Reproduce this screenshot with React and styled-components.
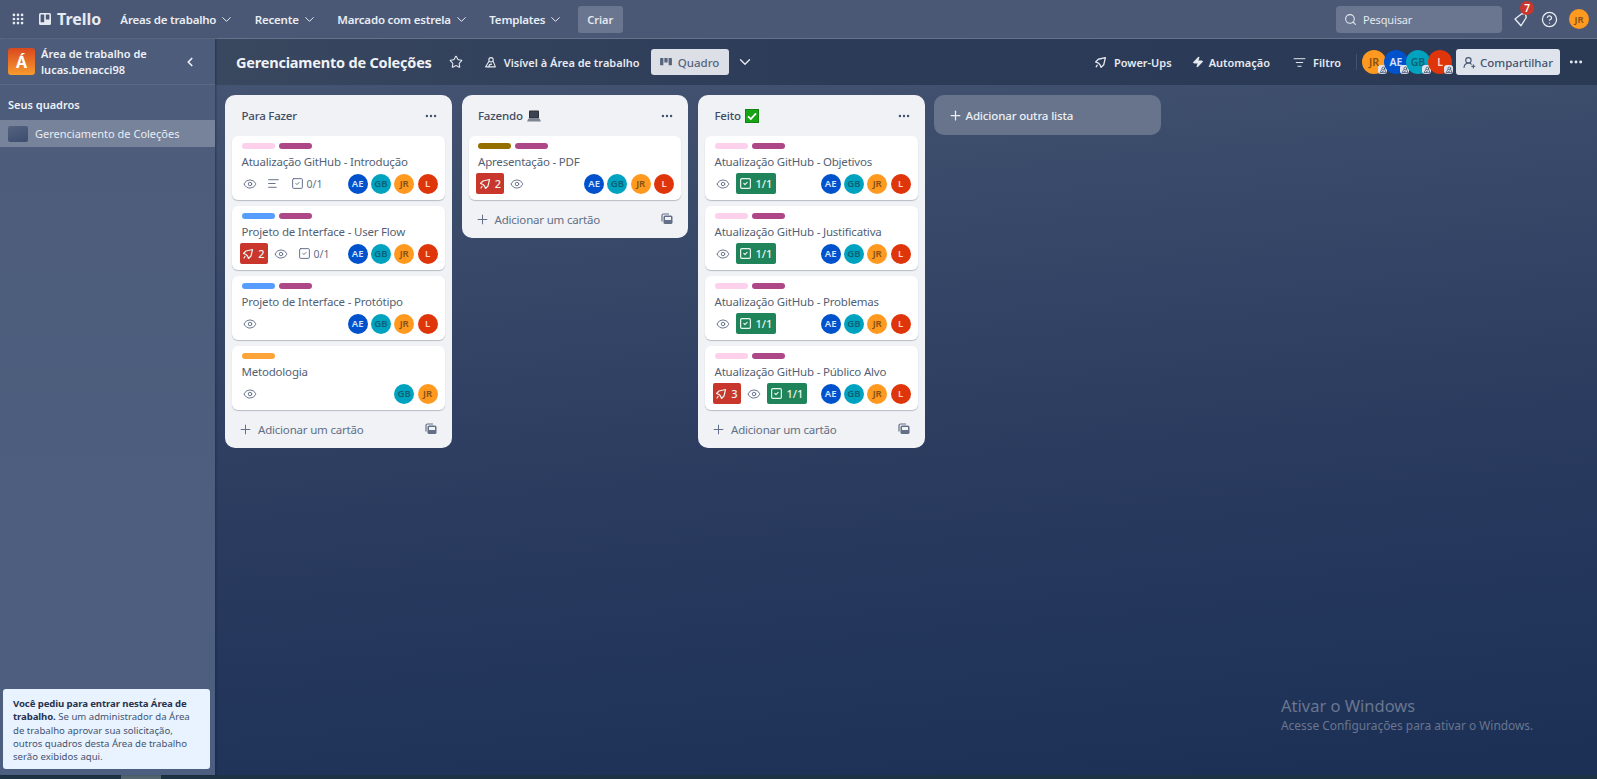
import React from 'react'
import styled, { createGlobalStyle } from 'styled-components'
import {
  AlignLeft, ChevronDown, ChevronLeft, CircleHelp, Ellipsis, Eye, Grip, ListFilter,
  Plus, Search, SquareCheck, Star, UserRoundPlus, Zap,
} from 'lucide-react'

const GlobalStyle = createGlobalStyle`
  html, body { margin: 0; padding: 0; height: 100%; overflow: hidden; }
  body { font-family: "Noto Sans", "Open Sans", sans-serif; }
  * { box-sizing: border-box; }
`

const Page = styled.div`
  position: relative;
  height: 100vh;
  display: flex;
  flex-direction: column;
  overflow: hidden;
  background: linear-gradient(175deg, #4b5a78 0%, #3c4c6b 25%, #2a3b5f 60%, #1b2f55 100%);
`

const TopNav = styled.header`
  flex: none;
  height: 39px;
  display: flex;
  align-items: center;
  padding: 0 8px 0 11px;
  background: #4a5875;
  border-bottom: 1px solid #65728c;
  color: #e9edf4;
`

const Logo = styled.div`
  display: flex;
  align-items: center;
  gap: 6px;
  margin: 0 19px 0 14px;
  font-size: 16px;
  font-weight: 700;
  color: #e6eaf1;
`

const NavItem = styled.div`
  display: flex;
  align-items: center;
  gap: 3px;
  margin-right: 20.5px;
  font-size: 11.5px;
  font-weight: 600;
  letter-spacing: -0.2px;
  white-space: nowrap;
`

const CreateButton = styled.div`
  height: 27px;
  width: 45px;
  margin-left: -6px;
  display: flex;
  align-items: center;
  justify-content: center;
  border-radius: 3px;
  background: #6a768f;
  font-size: 11px;
  font-weight: 600;
  color: #e4e8ef;
`

const NavRight = styled.div`
  margin-left: auto;
  display: flex;
  align-items: center;
`

const SearchBox = styled.div`
  width: 166px;
  height: 27px;
  display: flex;
  align-items: center;
  gap: 6px;
  padding-left: 8px;
  border-radius: 4px;
  background: #6a768f;
  font-size: 11px;
  letter-spacing: -0.15px;
  color: #e4e8ef;
`

const BellWrap = styled.div`
  position: relative;
  width: 18px;
  height: 18px;
  margin: 0 11px 0 10px;
`

const CountBadge = styled.span`
  position: absolute;
  top: -9px;
  left: 8px;
  width: 14px;
  height: 14px;
  border-radius: 50%;
  background: #c9372c;
  color: #fff;
  font-size: 10px;
  font-weight: 600;
  line-height: 14px;
  text-align: center;
`

const Body = styled.div`
  flex: 1;
  min-height: 0;
  display: flex;
`

const Sidebar = styled.aside`
  flex: none;
  width: 215px;
  display: flex;
  flex-direction: column;
  background: linear-gradient(180deg, #4d5c7a, #4d5f80);
  box-shadow: 1px 0 2px rgba(20, 30, 55, 0.45);
  z-index: 1;
`

const WorkspaceHead = styled.div`
  flex: none;
  height: 46px;
  display: flex;
  align-items: center;
  gap: 6px;
  padding: 0 18px 0 8px;
  border-bottom: 1px solid #5c6985;
  color: #eef1f6;
`

const WorkspaceTile = styled.div`
  flex: none;
  width: 27px;
  height: 27px;
  display: flex;
  align-items: center;
  justify-content: center;
  border-radius: 3px;
  background: linear-gradient(180deg, #d9481f, #f89b2e);
  color: #fff;
  font-size: 16px;
  font-weight: 700;
`

const WorkspaceName = styled.div`
  flex: 1;
  font-size: 11px;
  font-weight: 600;
  line-height: 16px;
`

const SectionTitle = styled.div`
  margin: 12px 8px 7px;
  height: 16px;
  font-size: 11px;
  font-weight: 600;
  line-height: 16px;
  color: #eef1f6;
`

const BoardRow = styled.div`
  height: 27px;
  display: flex;
  align-items: center;
  gap: 7px;
  padding-left: 8px;
  background: #76839b;
  font-size: 11px;
  color: #e8ecf3;
`

const BoardThumb = styled.div`
  width: 20px;
  height: 16px;
  border-radius: 2px;
  background: linear-gradient(160deg, #55637f, #3b4c6e);
`

const Notice = styled.div`
  margin: auto 5px 6px 3px;
  height: 80px;
  padding: 8px 17px 8px 10px;
  border-radius: 3px;
  background: #e9f2ff;
  font-size: 9.6px;
  line-height: 13.3px;
  color: #44546f;

  strong { font-weight: 700; letter-spacing: -0.1px; color: #26334d; }
`

const Main = styled.main`
  flex: 1;
  min-width: 0;
  display: flex;
  flex-direction: column;
`

const BoardHeader = styled.div`
  flex: none;
  height: 46px;
  display: flex;
  align-items: center;
  padding: 0 13px 0 21px;
  background: linear-gradient(90deg, #39475f, #2c3b58 45%, #2a3a55);
  color: #e6eaf1;
`

const BoardTitle = styled.h1`
  margin: 0 17px 0 0;
  font-size: 14.5px;
  font-weight: 700;
  letter-spacing: -0.2px;
  white-space: nowrap;
  color: #f0f2f6;
`

const HeaderAction = styled.div`
  display: flex;
  align-items: center;
  gap: ${(p) => p.$gap || 7}px;
  margin-left: ${(p) => p.$left || 0}px;
  font-size: 11px;
  font-weight: 600;
  white-space: nowrap;
`

const ViewButton = styled.div`
  width: 78px;
  height: 26px;
  margin-left: 11px;
  display: flex;
  align-items: center;
  justify-content: center;
  gap: 6px;
  border-radius: 3px;
  background: #dcdfe6;
  font-size: 11.5px;
  font-weight: 500;
  color: #56647d;
`

const ViewCaret = styled.span`
  display: flex;
  margin-left: 7px;
`

const HeaderRight = styled.div`
  margin-left: auto;
  display: flex;
  align-items: center;
`

const Divider = styled.div`
  width: 1px;
  height: 16px;
  margin: 0 5px 0 15px;
  background: #45526c;
`

const HeadAvatars = styled.div`
  display: flex;
  margin-right: 1px;
`

const HeadAvatar = styled.div`
  position: relative;
  width: 24px;
  height: 24px;
  margin-right: -2px;
  display: flex;
  align-items: center;
  justify-content: center;
  border-radius: 50%;
  background: ${(p) => p.$bg};
  color: ${(p) => p.$fg};
  font-size: 10.5px;
  font-weight: 600;
`

const MiniBadge = styled.span`
  position: absolute;
  right: -1px;
  bottom: 0;
  width: 9px;
  height: 9px;
  display: flex;
  align-items: center;
  justify-content: center;
  border-radius: 3px;
  background: #dfe4ec;
`

const ShareButton = styled.div`
  width: 104px;
  height: 26px;
  margin-left: 5px;
  display: flex;
  align-items: center;
  justify-content: center;
  gap: 4px;
  border-radius: 3px;
  background: #dfe4ec;
  font-size: 11.5px;
  font-weight: 500;
  color: #44546f;
`

const MoreButton = styled.div`
  margin-left: 8px;
  display: flex;
  color: #e6eaf1;
`

const Lists = styled.div`
  flex: 1;
  min-height: 0;
  display: flex;
  align-items: flex-start;
  gap: 10px;
  padding: 10px 0 0 10px;
`

const List = styled.section`
  flex: none;
  width: 226.5px;
  border-radius: 10px;
  background: #f0f2f5;
`

const ListHead = styled.div`
  height: 41px;
  display: flex;
  align-items: center;
  justify-content: space-between;
  padding: 0 14px 0 16.5px;
  color: #44546f;
`

const ListTitle = styled.div`
  display: flex;
  align-items: center;
  gap: 4px;
  font-size: 11.5px;
  font-weight: 500;
  letter-spacing: -0.2px;
  color: #3f4c63;
`

const CardStack = styled.div`
  display: flex;
  flex-direction: column;
  gap: 6px;
  padding: 0 7px;
`

const Card = styled.article`
  height: 64px;
  padding: 7px 7px 0 9.5px;
  border-radius: 6px;
  background: #fff;
  box-shadow: 0 1px 1px rgba(40, 55, 80, 0.28);
`

const Labels = styled.div`
  display: flex;
  gap: 4px;
  height: 6px;
`

const Label = styled.span`
  width: 33px;
  height: 6px;
  border-radius: 3px;
  background: ${(p) => p.$color};
`

const CardTitle = styled.div`
  height: 20px;
  margin-top: 3px;
  font-size: 11.5px;
  line-height: 20px;
  letter-spacing: -0.2px;
  color: #535f75;
  white-space: nowrap;
`

const CardFoot = styled.div`
  margin: 1px 0 0 -2px;
  height: 21px;
  display: flex;
  align-items: center;
  gap: 3px;
  color: #626f86;
`

const IconSlot = styled.span`
  width: ${(p) => p.$w || 20}px;
  display: flex;
  justify-content: center;
`

const CheckCount = styled.span`
  display: flex;
  align-items: center;
  gap: 3px;
  padding-left: 4px;
  font-size: 10.5px;
  color: #626f86;
`

const Chip = styled.span`
  width: ${(p) => p.$w}px;
  height: 21px;
  display: flex;
  align-items: center;
  justify-content: center;
  gap: 4px;
  border-radius: 2px;
  background: ${(p) => p.$bg};
  color: #e9f5ef;
  font-size: 11px;
  font-weight: 500;
`

const Avatars = styled.div`
  margin-left: auto;
  display: flex;
  gap: 3.3px;
`

const Avatar = styled.span`
  width: 20px;
  height: 20px;
  margin-left: ${(p) => p.$left || 0}px;
  display: flex;
  align-items: center;
  justify-content: center;
  border-radius: 50%;
  background: ${(p) => p.$bg};
  color: ${(p) => p.$fg};
  font-size: 9.5px;
  font-weight: 600;
`

const AddCard = styled.div`
  height: 38px;
  display: flex;
  align-items: center;
  gap: 5px;
  padding: 0 15px 0 13px;
  font-size: 11.5px;
  letter-spacing: -0.2px;
  color: #626f86;

  svg:last-child { margin-left: auto; }
`

const AddList = styled.div`
  flex: none;
  width: 227px;
  height: 40px;
  margin-left: -1px;
  display: flex;
  align-items: center;
  gap: 3px;
  padding-left: 14px;
  border-radius: 10px;
  background: #68748c;
  font-size: 11.5px;
  font-weight: 500;
  letter-spacing: -0.15px;
  color: #eceff4;
`

const ScrollStrip = styled.div`
  flex: none;
  height: 4px;
  background: #1d3243;
`

const ScrollThumb = styled.div`
  width: 40px;
  height: 4px;
  margin-left: 121px;
  background: #53666f;
`

const Watermark = styled.div`
  position: absolute;
  left: 1281px;
  top: 694px;
  color: rgba(255, 255, 255, 0.34);
  font-size: 11.9px;
  line-height: 17px;
  white-space: nowrap;

  b { display: block; font-size: 16.5px; font-weight: 400; line-height: 23px; }
`

const people = {
  AE: { $bg: '#0052cc', $fg: '#d5e4ff' },
  GB: { $bg: '#00a3bf', $fg: '#0b6075' },
  JR: { $bg: '#ff991f', $fg: '#835015' },
  L: { $bg: '#de350b', $fg: '#ffd5c8' },
}

const PINK = '#fdd0ec'
const PURPLE = '#ae4787'
const BLUE = '#579dff'
const YELLOW = '#946f00'
const ALL = ['AE', 'GB', 'JR', 'L']

const lists = [
  {
    title: 'Para Fazer',
    cards: [
      { labels: [PINK, PURPLE], title: 'Atualização GitHub - Introdução', desc: true, check: '0/1', who: ALL },
      { labels: [BLUE, PURPLE], title: 'Projeto de Interface - User Flow', rocket: 2, check: '0/1', who: ALL },
      { labels: [BLUE, PURPLE], title: 'Projeto de Interface - Protótipo', who: ALL },
      { labels: ['#fca43a'], title: 'Metodologia', who: ['GB', 'JR'] },
    ],
  },
  {
    title: 'Fazendo',
    icon: 'laptop',
    cards: [{ labels: [YELLOW, PURPLE], title: 'Apresentação - PDF', rocket: 2, who: ALL }],
  },
  {
    title: 'Feito',
    icon: 'check',
    cards: [
      { labels: [PINK, PURPLE], title: 'Atualização GitHub - Objetivos', done: '1/1', who: ALL },
      { labels: [PINK, PURPLE], title: 'Atualização GitHub - Justificativa', done: '1/1', who: ALL },
      { labels: [PINK, PURPLE], title: 'Atualização GitHub - Problemas', done: '1/1', who: ALL },
      { labels: [PINK, PURPLE], title: 'Atualização GitHub - Público Alvo', rocket: 3, done: '1/1', who: ALL },
    ],
  },
]

function RocketIcon({ size = 13, color = 'currentColor' }) {
  return (
    <svg width={size} height={size} viewBox="0 0 24 24" fill="none" stroke={color} strokeWidth="2.4" strokeLinejoin="round" strokeLinecap="round">
      <path d="M21 3 8 6 3 11l5 2 3 3 2 5 5-5z" />
      <path d="M6 17l-2 3" />
    </svg>
  )
}

function TrelloMark() {
  return (
    <svg width="12" height="12" viewBox="0 0 12 12">
      <rect width="12" height="12" rx="1.5" fill="#e6eaf1" />
      <rect x="1.6" y="1.6" width="3.6" height="7.6" rx="0.5" fill="#4a5875" />
      <rect x="6.8" y="1.6" width="3.6" height="4.8" rx="0.5" fill="#4a5875" />
    </svg>
  )
}

function TemplateIcon() {
  return (
    <svg width="12" height="12" viewBox="0 0 12 12" fill="none">
      <path d="M1 8.5V2.5A1.5 1.5 0 0 1 2.5 1H8" stroke="#626f86" strokeWidth="1.2" />
      <rect x="2.5" y="2.5" width="9" height="8.5" rx="1.6" fill="#626f86" />
      <rect x="4" y="4" width="6" height="3" fill="#f0f2f5" />
    </svg>
  )
}

function TeamIcon({ size = 12, color = 'currentColor', sw = 2 }) {
  return (
    <svg width={size} height={size} viewBox="0 0 24 24" fill="none" stroke={color} strokeWidth={sw} strokeLinejoin="round" strokeLinecap="round">
      <circle cx="13" cy="7" r="4" />
      <path d="M9 10 3 20h18l-4-10" />
      <path d="M9 20c0-3 2-5 5-5" />
    </svg>
  )
}

function BoardIcon() {
  return (
    <svg width="12" height="10" viewBox="0 0 13 11" fill="#56647d">
      <rect x="0" y="1" width="3.6" height="8" rx="0.6" />
      <rect x="4.7" y="1" width="3.6" height="5" rx="0.6" />
      <rect x="9.4" y="1" width="3.6" height="8" rx="0.6" />
    </svg>
  )
}

function BellIcon() {
  return (
    <svg width="18" height="18" viewBox="0 0 24 24" fill="none" stroke="#e9edf4" strokeWidth="1.8" strokeLinejoin="round" strokeLinecap="round">
      <path d="M13 5 4 12l8 9 7-11-1-5z" />
    </svg>
  )
}

function LaptopEmoji() {
  return (
    <svg width="14" height="12" viewBox="0 0 14 12">
      <rect x="2" y="0.5" width="10" height="8" rx="0.8" fill="#2b2f38" />
      <rect x="3" y="1.5" width="8" height="6" fill="#3d4350" />
      <path d="M1.5 8.5h11L14 11.5H0z" fill="#7d8591" />
    </svg>
  )
}

function CheckEmoji() {
  return (
    <svg width="14" height="14" viewBox="0 0 14 14">
      <rect width="14" height="14" fill="#16a316" stroke="#0c6b0c" strokeWidth="1" />
      <path d="M3 7.4 5.8 10 11 4.4" fill="none" stroke="#fff" strokeWidth="1.8" />
    </svg>
  )
}

function CardView({ card }) {
  return (
    <Card>
      <Labels>
        {card.labels.map((c, i) => <Label key={i} $color={c} />)}
      </Labels>
      <CardTitle>{card.title}</CardTitle>
      <CardFoot>
        {card.rocket && (
          <Chip $w={28} $bg="#c9372c">
            <RocketIcon size={12} />
            {card.rocket}
          </Chip>
        )}
        <IconSlot><Eye size={14} strokeWidth={1.6} /></IconSlot>
        {card.desc && <IconSlot $w={21}><AlignLeft size={13} strokeWidth={1.8} /></IconSlot>}
        {card.check && (
          <CheckCount>
            <SquareCheck size={13} strokeWidth={1.8} />
            {card.check}
          </CheckCount>
        )}
        {card.done && (
          <Chip $w={40} $bg="#1f845a">
            <SquareCheck size={13} strokeWidth={2.2} />
            {card.done}
          </Chip>
        )}
        <Avatars>
          {card.who.map((w) => <Avatar key={w} {...people[w]}>{w}</Avatar>)}
        </Avatars>
      </CardFoot>
    </Card>
  )
}

export default function App() {
  return (
    <Page>
      <GlobalStyle />
      <TopNav>
        <Grip size={14} strokeWidth={2.6} />
        <Logo><TrelloMark />Trello</Logo>
        <NavItem>Áreas de trabalho <ChevronDown size={15} strokeWidth={1.6} /></NavItem>
        <NavItem>Recente <ChevronDown size={15} strokeWidth={1.6} /></NavItem>
        <NavItem>Marcado com estrela <ChevronDown size={15} strokeWidth={1.6} /></NavItem>
        <NavItem>Templates <ChevronDown size={15} strokeWidth={1.6} /></NavItem>
        <CreateButton>Criar</CreateButton>
        <NavRight>
          <SearchBox><Search size={13} strokeWidth={2} />Pesquisar</SearchBox>
          <BellWrap>
            <BellIcon />
            <CountBadge>7</CountBadge>
          </BellWrap>
          <CircleHelp size={17} strokeWidth={1.8} />
          <Avatar {...people.JR} $left={11}>JR</Avatar>
        </NavRight>
      </TopNav>

      <Body>
        <Sidebar>
          <WorkspaceHead>
            <WorkspaceTile>Á</WorkspaceTile>
            <WorkspaceName>Área de trabalho de<br />lucas.benacci98</WorkspaceName>
            <ChevronLeft size={14} strokeWidth={3} />
          </WorkspaceHead>
          <SectionTitle>Seus quadros</SectionTitle>
          <BoardRow><BoardThumb />Gerenciamento de Coleções</BoardRow>
          <Notice>
            <strong>Você pediu para entrar nesta Área de trabalho.</strong> Se um administrador da Área de trabalho aprovar sua solicitação, outros quadros desta Área de trabalho serão exibidos aqui.
          </Notice>
        </Sidebar>

        <Main>
          <BoardHeader>
            <BoardTitle>Gerenciamento de Coleções</BoardTitle>
            <Star size={14} strokeWidth={1.8} />
            <HeaderAction $left={21}><TeamIcon size={13} />Visível à Área de trabalho</HeaderAction>
            <ViewButton><BoardIcon />Quadro</ViewButton>
            <ViewCaret><ChevronDown size={18} strokeWidth={1.8} /></ViewCaret>
            <HeaderRight>
              <HeaderAction><RocketIcon size={13} />Power-Ups</HeaderAction>
              <HeaderAction $left={20} $gap={5}><Zap size={12} fill="currentColor" />Automação</HeaderAction>
              <HeaderAction $left={23}><ListFilter size={13} strokeWidth={1.8} />Filtro</HeaderAction>
              <Divider />
              <HeadAvatars>
                {['JR', 'AE', 'GB', 'L'].map((w) => (
                  <HeadAvatar key={w} {...people[w]}>
                    {w}
                    <MiniBadge><TeamIcon size={8} color="#44546f" sw={2.4} /></MiniBadge>
                  </HeadAvatar>
                ))}
              </HeadAvatars>
              <ShareButton><UserRoundPlus size={13} strokeWidth={2} />Compartilhar</ShareButton>
              <MoreButton><Ellipsis size={16} strokeWidth={2.4} /></MoreButton>
            </HeaderRight>
          </BoardHeader>

          <Lists>
            {lists.map((list) => (
              <List key={list.title}>
                <ListHead>
                  <ListTitle>
                    {list.title}
                    {list.icon === 'laptop' && <LaptopEmoji />}
                    {list.icon === 'check' && <CheckEmoji />}
                  </ListTitle>
                  <Ellipsis size={14} strokeWidth={2.2} />
                </ListHead>
                <CardStack>
                  {list.cards.map((card) => <CardView key={card.title} card={card} />)}
                </CardStack>
                <AddCard>
                  <Plus size={15} strokeWidth={1.6} />
                  Adicionar um cartão
                  <TemplateIcon />
                </AddCard>
              </List>
            ))}
            <AddList><Plus size={15} strokeWidth={2} />Adicionar outra lista</AddList>
          </Lists>
        </Main>
      </Body>

      <ScrollStrip><ScrollThumb /></ScrollStrip>
      <Watermark><b>Ativar o Windows</b>Acesse Configurações para ativar o Windows.</Watermark>
    </Page>
  )
}
